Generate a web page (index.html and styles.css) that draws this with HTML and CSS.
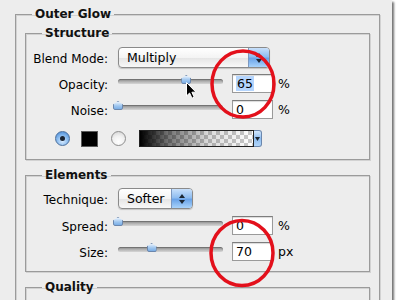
FILE: index.html
```html
<!DOCTYPE html>
<html>
<head>
<meta charset="utf-8">
<link rel="stylesheet" href="styles.css">
</head>
<body>
<div class="panel">
  <fieldset class="outer">
    <legend>Outer Glow</legend>

    <fieldset class="group structure">
      <legend>Structure</legend>
      <div class="row row-select">
        <span class="label">Blend Mode:</span>
        <div class="select select-blend">
          <span class="select-text">Multiply</span>
          <span class="select-btn">
            <svg width="8" height="12" viewBox="0 0 8 12"><path d="M4 1 L7 5 L1 5 Z M4 11 L7 7 L1 7 Z" fill="#1c2733"/></svg>
          </span>
        </div>
      </div>
      <div class="row row-field">
        <span class="label">Opacity:</span>
        <div class="slider"><span class="thumb" style="left:65%"></span></div>
        <div class="field"><span class="selected">65</span></div>
        <span class="unit">%</span>
      </div>
      <div class="row row-field row-noise">
        <span class="label">Noise:</span>
        <div class="slider"><span class="thumb" style="left:0%"></span></div>
        <div class="field">0</div>
        <span class="unit">%</span>
      </div>
      <div class="row row-swatch">
        <span class="radio radio-on"><span class="dot"></span></span>
        <span class="swatch"></span>
        <span class="radio radio-off"></span>
        <div class="gradient-pick">
          <span class="gradient-bar"></span>
          <span class="gradient-btn">
            <svg width="5" height="4" viewBox="0 0 5 4"><path d="M0 0 L5 0 L2.5 4 Z" fill="#1c2733"/></svg>
          </span>
        </div>
      </div>
    </fieldset>

    <fieldset class="group elements">
      <legend>Elements</legend>
      <div class="row row-select">
        <span class="label">Technique:</span>
        <div class="select select-tech">
          <span class="select-text">Softer</span>
          <span class="select-btn">
            <svg width="8" height="12" viewBox="0 0 8 12"><path d="M4 1 L7 5 L1 5 Z M4 11 L7 7 L1 7 Z" fill="#1c2733"/></svg>
          </span>
        </div>
      </div>
      <div class="row row-field">
        <span class="label">Spread:</span>
        <div class="slider"><span class="thumb" style="left:0%"></span></div>
        <div class="field">0</div>
        <span class="unit">%</span>
      </div>
      <div class="row row-field">
        <span class="label">Size:</span>
        <div class="slider"><span class="thumb" style="left:32%"></span></div>
        <div class="field">70</div>
        <span class="unit">px</span>
      </div>
    </fieldset>

    <fieldset class="group quality">
      <legend>Quality</legend>
    </fieldset>
  </fieldset>

  <svg class="annotations" width="392" height="300" viewBox="0 0 392 300">
    <ellipse cx="243" cy="84" rx="31" ry="33" fill="none" stroke="#e3101b" stroke-width="3.5"/>
    <ellipse cx="242" cy="253" rx="31" ry="32.5" fill="none" stroke="#e3101b" stroke-width="3.5"/>
    <path d="M186.5 82.5 L186.5 96 L189.6 93 L192 98.2 L194.2 97.2 L191.9 92.2 L196 92.2 Z" fill="#000" stroke="#fff" stroke-width="1" stroke-linejoin="round"/>
  </svg>
</div>
</body>
</html>
```

FILE: styles.css
```css
html, body {
  margin: 0;
  padding: 0;
  background: #ffffff;
}

body {
  font-family: "DejaVu Sans", "Liberation Sans", sans-serif;
  font-size: 12px;
  color: #000;
}

.panel {
  position: relative;
  width: 392px;
  height: 300px;
  padding-top: 7px;
  box-sizing: border-box;
  background: #ededed;
  box-shadow: 2px 2px 2px rgba(0, 0, 0, 0.55);
  overflow: hidden;
}

fieldset {
  margin: 0;
  min-width: 0;
  border: 1px solid #9b9b9b;
  box-shadow: 1px 1px 0 #d2d2d2, inset 1px 1px 0 #d2d2d2;
}

legend {
  font-weight: bold;
  font-size: 12px;
  line-height: 14px;
  padding: 0 3px;
  color: #111;
}

.outer {
  margin-left: 15px;
  width: 365px;
  box-sizing: border-box;
  padding: 0 9px;
  height: 340px;
}

.outer > legend {
  margin-left: 7px;
}

.group {
  padding: 0 0 0 0;
}

.group > legend {
  margin-left: 16px;
}

.structure {
  margin-top: 5px;
  padding-bottom: 12px;
}

.elements {
  margin-top: 8px;
  padding-bottom: 10px;
}

.quality {
  margin-top: 8px;
  height: 40px;
}

.row {
  display: flex;
  align-items: center;
}

.label {
  width: 82px;
  margin-right: 10px;
  text-align: right;
  white-space: nowrap;
  padding-top: 2px;
}

.row-select {
  margin-top: 7px;
  height: 21px;
}

.elements .row-select {
  margin-top: 6px;
}

.row-field {
  margin-top: 6px;
  height: 19px;
}

.row-noise,
.elements .row-field {
  margin-top: 7px;
}

.row-swatch {
  margin-top: 11px;
  height: 17px;
  padding-left: 29px;
}

/* Aqua-like popup menus */
.select {
  display: flex;
  height: 21px;
  box-sizing: border-box;
  border: 1px solid #8a8a8a;
  border-radius: 4px;
  background: linear-gradient(#ffffff 0%, #f4f4f4 50%, #e4e4e4 51%, #f8f8f8 100%);
  box-shadow: 0 1px 1px rgba(0, 0, 0, 0.18);
  overflow: hidden;
}

.select-blend {
  width: 152px;
}

.select-tech {
  width: 75px;
}

.select-text {
  flex: 1;
  padding-left: 8px;
  line-height: 19px;
  font-size: 12.5px;
}

.select-btn {
  width: 20px;
  display: flex;
  align-items: center;
  justify-content: center;
  border-left: 1px solid #7b97bf;
  background: linear-gradient(#c8e0fb 0%, #8fbdf0 45%, #6aa3e8 55%, #a9d3fb 100%);
}

/* sliders */
.slider {
  position: relative;
  width: 105px;
  height: 5px;
  align-self: flex-start;
  margin-top: 5px;
  border-radius: 3px;
  background: linear-gradient(#8d8d8d, #b9b9b9 60%, #d6d6d6);
  box-shadow: inset 0 1px 1px rgba(0, 0, 0, 0.25);
}

.thumb {
  position: absolute;
  top: -4px;
  width: 10px;
  height: 9px;
  margin-left: -5px;
  background: linear-gradient(#e6f1fd, #9fc6ef 55%, #7aaee6);
  border: 1px solid #6b87ad;
  box-sizing: border-box;
  clip-path: polygon(50% 0, 100% 40%, 100% 100%, 0 100%, 0 40%);
  border-radius: 0 0 2px 2px;
}

/* text fields */
.field {
  width: 41px;
  height: 19px;
  margin-left: 9px;
  box-sizing: border-box;
  border: 1px solid #9a9a9a;
  border-top-color: #7d7d7d;
  background: #fff;
  box-shadow: inset 0 1px 1px rgba(0, 0, 0, 0.15);
  padding-left: 3px;
  font-size: 12.5px;
  line-height: 17px;
}

.selected {
  background: #b5d5fd;
  padding: 0 1px;
}

.unit {
  margin-left: 5px;
  font-size: 12.5px;
}

/* color options */
.radio {
  width: 15px;
  height: 15px;
  border-radius: 50%;
  box-sizing: border-box;
  display: flex;
  align-items: center;
  justify-content: center;
}

.radio-on {
  border: 1px solid #4b6f9c;
  background: radial-gradient(circle at 50% 70%, #d9ecff 0%, #7fb4ec 55%, #3d7fcf 100%);
}

.dot {
  width: 5px;
  height: 5px;
  border-radius: 50%;
  background: #1a2433;
}

.radio-off {
  margin-left: 13px;
  border: 1px solid #8d8d8d;
  background: radial-gradient(circle at 50% 75%, #ffffff 0%, #f0f0f0 50%, #cfcfcf 100%);
}

.swatch {
  width: 17px;
  height: 16px;
  margin-left: 11px;
  background: #000;
  box-sizing: border-box;
  border: 1px solid #5a5a5a;
}

.gradient-pick {
  display: flex;
  margin-left: 13px;
  height: 17px;
}

.gradient-bar {
  width: 115px;
  box-sizing: border-box;
  border: 1px solid #222;
  background:
    linear-gradient(to right, rgba(0, 0, 0, 1) 0%, rgba(0, 0, 0, 0.55) 25%, rgba(0, 0, 0, 0.15) 60%, rgba(0, 0, 0, 0) 100%),
    repeating-conic-gradient(#c9c9c9 0% 25%, #ffffff 0% 50%) 0 0 / 8px 8px;
}

.gradient-btn {
  width: 8px;
  display: flex;
  align-items: center;
  justify-content: center;
  border: 1px solid #6b87ad;
  border-left: none;
  border-radius: 0 3px 3px 0;
  box-sizing: border-box;
  background: linear-gradient(#d4e8fd, #8dbcf0 50%, #b3d7fb);
}

/* overlay annotations */
.annotations {
  position: absolute;
  left: 0;
  top: 0;
  pointer-events: none;
}
```
